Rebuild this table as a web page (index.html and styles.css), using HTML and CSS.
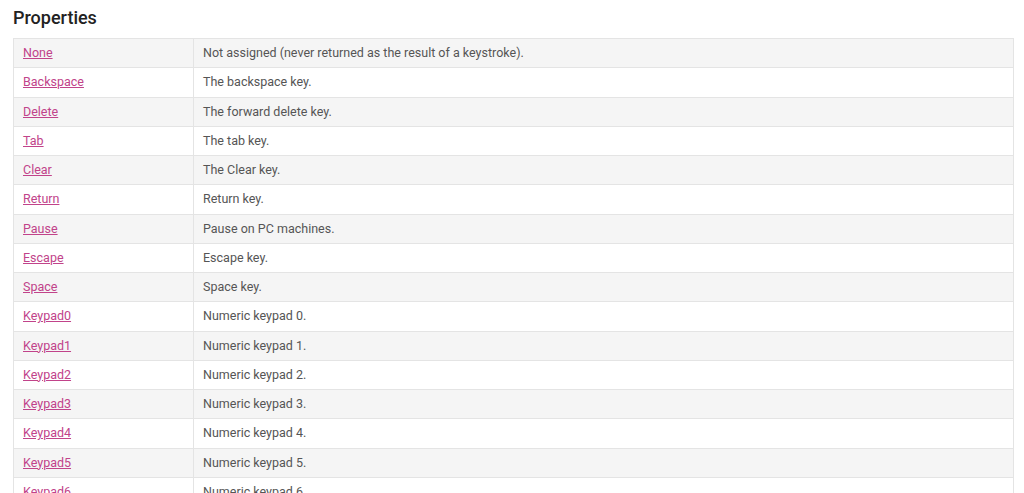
FILE: index.html
```html
<!DOCTYPE html>
<html>
<head>
<meta charset="utf-8">
<link rel="stylesheet" href="styles.css">
</head>
<body>
<div class="page">
<h2 class="title">Properties</h2>
<table class="props">
<colgroup><col class="c1"><col class="c2"></colgroup>
<tbody>
<tr><td><a href="#">None</a></td><td>Not assigned (never returned as the result of a keystroke).</td></tr>
<tr><td><a href="#">Backspace</a></td><td>The backspace key.</td></tr>
<tr><td><a href="#">Delete</a></td><td>The forward delete key.</td></tr>
<tr><td><a href="#">Tab</a></td><td>The tab key.</td></tr>
<tr><td><a href="#">Clear</a></td><td>The Clear key.</td></tr>
<tr><td><a href="#">Return</a></td><td>Return key.</td></tr>
<tr><td><a href="#">Pause</a></td><td>Pause on PC machines.</td></tr>
<tr><td><a href="#">Escape</a></td><td>Escape key.</td></tr>
<tr><td><a href="#">Space</a></td><td>Space key.</td></tr>
<tr><td><a href="#">Keypad0</a></td><td>Numeric keypad 0.</td></tr>
<tr><td><a href="#">Keypad1</a></td><td>Numeric keypad 1.</td></tr>
<tr><td><a href="#">Keypad2</a></td><td>Numeric keypad 2.</td></tr>
<tr><td><a href="#">Keypad3</a></td><td>Numeric keypad 3.</td></tr>
<tr><td><a href="#">Keypad4</a></td><td>Numeric keypad 4.</td></tr>
<tr><td><a href="#">Keypad5</a></td><td>Numeric keypad 5.</td></tr>
<tr><td><a href="#">Keypad6</a></td><td>Numeric keypad 6.</td></tr>
</tbody>
</table>
</div>
</body>
</html>
```

FILE: styles.css
```css
html, body {
  margin: 0;
  padding: 0;
  background: #ffffff;
}
.page {
  padding: 0 10px 0 13px;
  font-family: Roboto, "Liberation Sans", sans-serif;
}
.title {
  margin: 0;
  padding-top: 7px;
  height: 38px;
  box-sizing: border-box;
  font-size: 18px;
  font-weight: 500;
  line-height: 22px;
  color: #222222;
}
.props {
  width: 100%;
  border-collapse: collapse;
  table-layout: fixed;
  font-size: 12.5px;
  line-height: 20.25px;
  color: #555555;
}
.c1 { width: 180px; }
.props td {
  border: 1px solid #e4e4e4;
  padding: 4px 9px;
  vertical-align: top;
}
.props tr:nth-child(odd) td {
  background: #f5f5f5;
}
.props a {
  color: #c1438a;
  text-decoration: underline;
}
```
